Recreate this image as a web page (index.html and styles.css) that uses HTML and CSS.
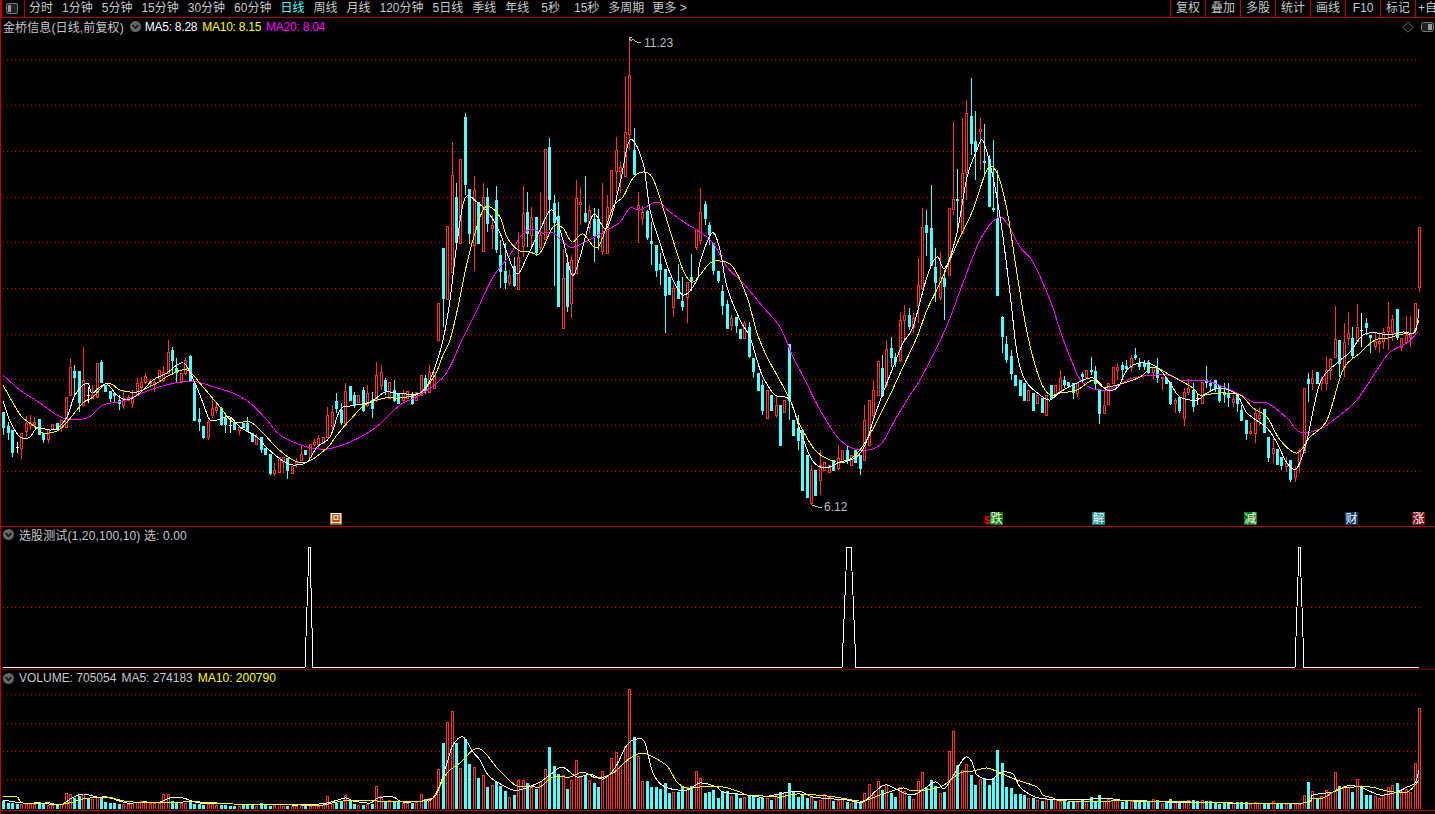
FILE: index.html
```html
<!DOCTYPE html>
<html lang="zh">
<head>
<meta charset="utf-8">
<title>金桥信息 日线</title>
<link rel="stylesheet" href="styles.css">
</head>
<body>
<div class="app">
  <header class="toolbar">
    <div class="tool-icon">
      <svg class="panel-icon" viewBox="0 0 12 11"><rect x="0.5" y="0.5" width="11" height="10" rx="1.5" class="panel-frame"/><rect x="2" y="2" width="3" height="7" class="panel-fill"/></svg>
    </div>
    <nav class="periods">
      <span>分时</span><span>1分钟</span><span>5分钟</span><span>15分钟</span><span>30分钟</span><span>60分钟</span><span class="active">日线</span><span>周线</span><span>月线</span><span>120分钟</span><span>5日线</span><span>季线</span><span>年线</span><span class="wide">5秒</span><span class="wider">15秒</span><span>多周期</span><span class="tight">更多 &gt;</span>
    </nav>
    <div class="tools">
      <span>复权</span><span>叠加</span><span>多股</span><span>统计</span><span>画线</span><span>F10</span><span>标记</span><span class="clip">+自</span>
    </div>
  </header>

  <section class="pane pane-main">
    <div class="legend">
      <span class="name spaced">金桥信息(日线,前复权)</span>
      <svg class="chev" viewBox="0 0 11 11"><circle cx="5.5" cy="5.5" r="5.5" class="chev-bg"/><path d="M2.5 4 L5.5 7 L8.5 4" class="chev-mark"/></svg>
      <span class="white tight-num">MA5: 8.28</span>
      <span class="yellow tight-num">MA10: 8.15</span>
      <span class="magenta tight-num">MA20: 8.04</span>
      <span class="legend-right">
        <svg class="diamond" viewBox="0 0 12 12"><path d="M6 0.8 L11.2 6 L6 11.2 L0.8 6 Z"/></svg>
        <svg class="panel-icon small" viewBox="0 0 13 10"><rect x="0.5" y="0.5" width="12" height="9" rx="2" class="panel-frame"/><rect x="7" y="2" width="4" height="6" class="panel-fill"/></svg>
      </span>
    </div>
    <svg class="plot plot-main" viewBox="1 36 1434 490" preserveAspectRatio="none">
      <g id="main-plot"></g>
      <g class="notes">
        <path class="note-line" d="M632 41 L629 39 L629 37 L632 37 M632 39 L637 42 L641 43"/>
        <text x="644" y="47" class="note">11.23</text>
        <path class="note-line" d="M812 505 L818 507 L822 507"/>
        <text x="824" y="511" class="note">6.12</text>
      </g>
      <g class="marks">
        <rect x="330" y="513" width="12" height="12" class="mk mk-orange"/><text x="336" y="523" class="mk-text">回</text>
        <text x="987" y="524" class="mk-dollar">$</text>
        <rect x="990" y="512" width="13" height="13" class="mk mk-green"/><text x="996.5" y="523" class="mk-text">跌</text>
        <rect x="1092" y="512" width="13" height="13" class="mk mk-teal"/><text x="1098.5" y="523" class="mk-text">解</text>
        <rect x="1244" y="512" width="13" height="13" class="mk mk-green"/><text x="1250.5" y="523" class="mk-text">减</text>
        <rect x="1345" y="512" width="13" height="13" class="mk mk-navy"/><text x="1351.5" y="523" class="mk-text">财</text>
        <rect x="1412" y="512" width="13" height="13" class="mk mk-maroon"/><text x="1418.5" y="523" class="mk-text">涨</text>
      </g>
    </svg>
  </section>

  <section class="pane pane-ind">
    <div class="legend short">
      <svg class="chev first" viewBox="0 0 11 11"><circle cx="5.5" cy="5.5" r="5.5" class="chev-bg"/><path d="M2.5 4 L5.5 7 L8.5 4" class="chev-mark"/></svg>
      <span class="name spaced">选股测试(1,20,100,10) 选: 0.00</span>
    </div>
    <svg class="plot plot-ind" viewBox="1 544 1434 125" preserveAspectRatio="none">
      <g id="ind-plot"></g>
    </svg>
  </section>

  <section class="pane pane-vol">
    <div class="legend short">
      <svg class="chev first" viewBox="0 0 11 11"><circle cx="5.5" cy="5.5" r="5.5" class="chev-bg"/><path d="M2.5 4 L5.5 7 L8.5 4" class="chev-mark"/></svg>
      <span class="name">VOLUME: 705054</span>
      <span class="name">MA5: 274183</span>
      <span class="yellow">MA10: 200790</span>
    </div>
    <svg class="plot plot-vol" viewBox="1 686 1434 123" preserveAspectRatio="none">
      <g id="vol-plot"></g>
    </svg>
  </section>
</div>
<script src="script.js"></script>
</body>
</html>
```
FILE: styles.css
```css
* { box-sizing: border-box; }
html, body { margin: 0; padding: 0; background: #000; height: 100%; overflow: hidden; }
body {
  font-family: "Liberation Sans", "Noto Sans CJK SC", sans-serif;
  font-size: 12px;
  color: #c8c8c8;
}
.app {
  display: flex;
  flex-direction: column;
  height: 814px;
  border-left: 1px solid #c00000;
}
.toolbar {
  display: flex;
  height: 18px;
  flex: none;
  border-bottom: 1px solid #b00000;
  line-height: 17px;
}
.tool-icon {
  width: 24px;
  flex: none;
  border-left: 1px solid #c00000;
  border-right: 1px solid #b00000;
  display: flex;
  align-items: center;
  padding-left: 4px;
}
.panel-icon { width: 12px; height: 11px; display: block; }
.panel-icon.small { width: 13px; height: 10px; }
.panel-frame { fill: #222; stroke: #777; stroke-width: 1; }
.panel-fill { fill: #999; }
.periods {
  flex: 1;
  min-width: 0;
  display: flex;
  gap: 9px;
  padding-left: 4px;
  white-space: nowrap;
}
.periods .active { color: #54ffff; }
.periods .wide { margin-left: 3px; }
.periods .wider { margin-left: 5px; }
.periods .tight { margin-left: -1px; }
.tools {
  width: 265px;
  flex: none;
  display: flex;
  overflow: hidden;
}
.tools span {
  flex: none;
  width: 35px;
  border-left: 1px solid #c00000;
  text-align: center;
  white-space: nowrap;
}
.tools .clip {
  width: 21px;
  text-align: left;
  padding-left: 2px;
}
.pane { flex: none; display: flex; flex-direction: column; }
.pane-main { height: 509px; border-bottom: 1px solid #c00000; }
.pane-ind { height: 143px; border-bottom: 1px solid #6a0000; }
.pane-vol { height: 141px; border-bottom: 1px solid #c00000; }
.legend {
  display: flex;
  align-items: center;
  flex: none;
  height: 18px;
  padding: 0 0 1px 2px;
  white-space: nowrap;
  gap: 5px;
}
.legend.short { height: 17px; padding: 0 0 2px 2px; }
.pane-vol .legend.short { height: 16px; padding: 0 0 0 2px; }
.name { color: #c8c8c8; }
.spaced { letter-spacing: 0.12px; }
.white { color: #fff; }
.yellow { color: #ff0; }
.magenta { color: #f0f; }
.tight-num { letter-spacing: -0.25px; }
.chev { width: 11px; height: 11px; flex: none; margin: 0 -1px 0 1px; }
.chev.first { margin: 0; }
.chev-bg { fill: #666; }
.chev-mark { fill: none; stroke: #111; stroke-width: 1.6; }
.legend-right {
  margin-left: auto;
  display: flex;
  align-items: center;
  gap: 7px;
  padding-right: 1px;
}
.diamond { width: 12px; height: 12px; fill: none; stroke: #666; stroke-width: 1; }
.plot { display: block; flex: none; width: 1434px; }
.plot-main { height: 490px; shape-rendering: crispEdges; }
.plot-ind { height: 125px; shape-rendering: crispEdges; }
.plot-vol { height: 123px; shape-rendering: crispEdges; }
.grid { stroke: #d80000; stroke-width: 1; stroke-dasharray: 1 3; }
.ma { fill: none; stroke-width: 1; }
.ma-w { stroke: #fff; }
.ma-y { stroke: #ff0; }
.ma-m { stroke: #f0f; }
.up { fill: #ff3232; }
.hole { fill: #000; }
.dn { fill: #54ffff; }
.doji { fill: #fff; }
.ind-line { fill: none; stroke: #fff; stroke-width: 1; }
.note { fill: #bdbdbd; font-size: 12px; shape-rendering: auto; }
.note-line { fill: none; stroke: #bdbdbd; stroke-width: 1; }
.mk-text { fill: #fff; font-size: 12px; text-anchor: middle; font-family: "Noto Sans CJK SC", sans-serif; }
.mk-dollar { fill: #f00; font-size: 11px; font-weight: bold; text-anchor: middle; }
.mk-orange { fill: #a85a10; }
.mk-green { fill: #0a7a0a; }
.mk-teal { fill: #0a8a8a; }
.mk-navy { fill: #0a3a70; }
.mk-maroon { fill: #7a0a0a; }
```
FILE: script.js
```js
// Daily K-line data, in page pixel coordinates: [x, colour(1 up, 0 down, 2 doji), bodyTop, bodyBottom, high, low]
var K = [
[3,0,412,427,412,435],[8,0,426,432,422,440],[12,0,430,452,430,457],[16,2,447,448,442,453],[20,1,433,448,433,459],[25,1,423,431,416,437],[29,1,423,425,415,430],[34,1,422,424,417,428],[38,0,419,434],[43,0,433,439,433,443],[48,1,429,439,429,443],[52,1,424,429],[56,0,423,429],[61,1,420,427,420,432],[65,1,397,427],[70,1,367,395,358,395],[75,0,371,377,365,395],[79,0,371,402,371,412],[83,1,380,405,347,405],[88,2,395,396,387,403],[92,1,395,398,385,398],[97,1,363,397],[101,0,362,382,360,382],[105,0,385,391],[110,0,391,398,391,402],[114,0,393,395,393,403],[119,0,400,403,395,410],[123,1,398,405,390,409],[127,1,397,400,395,400],[132,1,397,403,390,408],[136,1,383,395,378,395],[141,1,382,387,377,390],[145,1,376,382,373,384],[150,1,381,383,379,386],[154,1,382,384,380,392],[159,1,370,378,370,382],[163,1,372,380,366,382],[168,1,352,373,340,374],[172,0,350,360,347,375],[176,0,368,372,358,382],[181,1,373,382],[185,1,360,373,358,375],[189,0,356,380,355,382],[194,0,383,420,382,420],[199,0,419,421,408,431],[203,0,426,437,426,439],[207,1,422,437,420,440],[212,1,408,415,399,418],[216,1,407,410,402,414],[220,0,408,424,407,426],[225,0,418,424,415,433],[230,2,425,426,418,433],[234,0,422,429],[239,1,427,430,427,435],[243,0,423,427],[248,0,423,431,417,431],[252,0,433,441],[257,1,437,444,434,444],[261,0,437,449,437,453],[265,0,448,454],[270,0,454,473,454,475],[274,1,470,473,463,476],[279,1,457,472],[283,1,457,462,457,473],[287,0,458,470,458,479],[292,1,466,473],[296,1,462,464,458,468],[300,1,454,460,446,460],[305,0,450,454],[310,1,444,457],[314,1,442,444,439,446],[318,1,438,444,435,448],[323,1,437,443],[327,1,415,437,407,438],[331,1,412,426,405,430],[336,0,401,408,393,413],[340,0,410,422,403,425],[345,1,391,423,383,425],[349,0,386,400],
[354,0,395,405,392,408],[358,1,395,402],[363,0,390,410,387,412],[367,1,393,405,385,407],[372,0,400,408,392,418],[376,1,375,400,362,402],[381,1,372,385,365,390],[385,0,380,390,378,395],[390,1,382,398],[394,0,390,400,380,402],[398,0,393,403],[403,1,393,400,390,403],[407,1,391,398],[412,0,395,403,392,405],[416,1,392,400],[421,1,375,395],[425,0,378,390,375,394],[430,1,372,392,365,393],[434,1,372,388],
[439,1,303,340],[443,0,248,298,248,327],[447,1,226,299],[452,1,175,272,142,272],[456,0,197,242,183,245],[460,1,159,243],[464,0,117,184,113,195],[469,0,189,233,189,244],[473,1,190,245,176,271],[478,0,202,243],[482,1,197,251,183,251],[487,0,197,223,188,232],[491,1,225,228,215,249],[496,0,200,249,186,253],[500,0,255,271,240,288],[504,0,271,282,243,289],[509,1,275,283,270,286],[513,0,266,285,257,287],[518,1,257,289,232,289],[523,1,213,246,186,257],[527,0,212,233,192,247],[532,1,217,235,207,247],[536,0,217,252,217,256],[541,1,235,247,192,250],[545,1,149,239],[549,0,147,199,138,230],[553,0,203,222,195,286],[558,0,216,306,202,306],[562,1,278,328,249,328],[567,0,263,306,255,312],[571,1,260,303,255,318],[575,1,198,273,180,273],[580,1,202,204,187,225],[584,0,213,221,176,223],[589,1,210,227,205,233],[593,0,219,235,208,262],[598,0,219,237,209,250],[602,1,233,251,183,255],[607,1,207,253,195,253],[611,1,170,215],[615,1,150,171,137,193],[620,1,167,171,162,193],[624,1,132,176,76,176],[629,1,75,134,40,150],[633,0,150,174,128,174],[639,1,205,208,192,243],[642,1,212,218,206,225],[646,0,211,237,210,240],[651,0,241,243,222,265],[655,0,245,270,245,277],[660,0,264,269,253,285],[664,0,269,295,269,333],[669,0,277,294],[673,1,288,307,285,317],[678,0,281,298,264,298],[682,0,301,306,277,311],[686,1,282,297,282,323],[691,0,277,280,254,291],[695,1,229,247,229,250],
[700,1,212,240,188,245],[704,0,204,218,201,225],[709,0,225,234,222,245],[713,0,243,270,243,275],[718,0,271,280,271,283],[722,0,291,305,285,315],[727,0,304,328,300,328],[732,1,318,325,315,331],[736,0,317,325,317,333],[741,0,329,338],[745,1,323,338,321,338],[749,0,327,356,322,358],[753,0,358,371,358,378],[758,0,373,390],[762,0,385,410,380,415],[767,1,390,418],[771,0,395,410],[776,1,405,415,395,418],[780,0,405,445],[785,1,400,412],[789,0,344,400,344,420],[793,0,420,435],[798,0,428,440,415,450],[803,0,430,490],[807,0,455,497],[812,1,470,503,465,505],[816,0,470,495],[820,1,465,480,450,495],[825,1,462,470],[829,1,465,472],[834,0,460,470],[838,1,458,468,445,470],[843,1,450,462],[847,0,450,460,445,464],[852,1,455,465],[856,0,450,462],[860,0,455,468,455,475],[865,1,420,460,405,460],[869,1,400,445],[873,1,390,415,380,418],[878,1,361,395],[882,0,368,395,355,397],[887,1,349,385,340,387],
[892,0,348,357,337,367],[896,0,357,361,353,367],[901,1,320,360,312,362],[904,1,315,320,305,342],[908,0,315,326,308,330],[913,1,318,327,313,333],[918,1,285,305,258,323],[922,1,227,288,208,290],[927,0,225,232,210,256],[931,0,228,265,185,265],[935,0,267,282,248,302],[939,1,277,297,252,300],[944,0,278,286,270,320],[948,1,208,275],[953,1,199,209,122,215],[957,0,199,200,169,230],[962,1,173,233,118,233],[966,1,113,172,100,200],[971,0,116,143,78,155],[975,0,141,151,111,180],[979,1,129,131,118,170],[984,0,161,162,124,177],[988,0,159,206,155,207],[993,0,208,209,140,212],[998,0,218,295,170,295],[1002,0,317,336,316,353],[1007,0,344,359,336,363],[1011,0,356,373,350,380],[1016,0,375,385],[1020,0,380,395],[1025,0,383,400],[1029,1,390,400],[1033,0,393,410],[1038,1,395,403],[1042,0,398,412],[1047,1,395,415],[1051,0,385,398],[1056,1,385,395],[1060,1,378,392,370,392],
[1064,0,380,384,376,388],[1069,0,382,385],[1073,0,383,392,383,399],[1077,1,383,393,383,397],[1082,0,374,376,372,383],[1087,1,370,377],[1091,0,370,371,357,375],[1095,0,371,383,366,390],[1100,0,390,413,390,424],[1104,1,405,413,390,413],[1108,1,383,404],[1113,1,367,383],[1117,1,367,370,363,380],[1122,0,365,369,362,378],[1126,0,366,368,360,372],[1130,1,358,367,355,372],[1135,0,355,357,348,360],[1139,0,363,366,358,370],[1144,0,363,366,360,370],[1148,0,362,372,360,374],[1153,1,367,372,367,380],[1157,0,368,377,358,383],[1162,1,377,378,377,390],[1166,0,378,383],[1171,0,382,403,382,405],[1175,1,400,403,398,413],[1179,0,397,410,397,413],[1184,1,392,418,388,426],[1188,1,388,392,379,395],[1193,0,390,406,383,412],[1197,2,398,399,393,405],[1202,1,382,403],[1206,0,380,382,366,388],[1210,0,383,385,380,390],[1215,0,380,388,380,392],[1220,0,385,400,385,403],[1224,0,392,394,383,403],[1228,0,393,397,383,407],[1233,1,399,402,395,407],[1237,0,395,403,395,412],[1242,0,410,420,405,420],[1246,0,420,433,420,440],[1251,1,431,433,423,435],[1255,1,413,433,410,443],[1259,1,415,418,407,425],[1264,0,409,432],[1269,0,437,457,437,462],[1273,1,448,453,438,463],[1277,0,449,464,449,465],[1282,0,457,465,457,470],[1286,1,463,466,457,472],[1290,0,460,479,460,482],[1295,1,469,477,466,482],[1300,1,450,463,448,473],[1304,1,388,452],[1309,0,379,383,373,402],[1313,1,378,383,370,390],[1317,0,372,383],[1322,1,379,383,377,391],[1326,1,370,383,356,390],[1331,1,359,370,358,380],[1336,1,339,357,306,357],[1340,0,340,363,340,377],[1344,1,342,367,323,377],[1349,1,333,338,312,345],[1353,0,338,355,327,359],[1357,1,327,341,304,341],[1362,2,330,331,313,347],[1366,0,323,327,318,335],[1371,0,335,337,335,353],[1375,1,341,346,332,350],[1379,1,341,343,333,353],[1384,1,332,341,328,349],[1388,1,327,331,302,350],[1393,1,319,332,315,341],[1397,0,309,337,309,340],[1402,1,338,347,338,351],[1406,1,335,342,316,343],[1410,1,335,337,316,347],[1415,1,303,330,303,335],[1419,1,227,287,227,292]
];

var MA5 = [3,401,10,421,20,437,30,437,37,428,50,430,58,428,67,417,75,395,87,383,92,393,100,387,107,384,117,395,127,400,140,393,153,380,167,373,177,365,185,364,195,383,203,403,210,420,220,419,230,417,240,427,257,437,267,448,283,461,293,465,307,462,317,447,330,437,340,410,350,406,370,402,385,392,395,393,420,393,432,375,443,340,450,300,457,243,465,198,478,203,490,215,500,233,507,253,517,274,527,257,540,230,552,210,563,240,572,275,580,257,593,215,607,228,620,183,630,140,643,163,650,210,660,243,670,273,683,295,697,280,700,262,712,233,720,250,727,287,740,320,750,337,757,360,763,377,775,395,790,400,800,430,812,460,825,468,840,462,855,458,865,445,875,415,883,393,890,375,903,343,913,327,927,277,937,257,945,268,957,233,967,177,977,150,983,141,993,177,1002,230,1010,293,1017,353,1025,380,1040,395,1050,400,1060,392,1077,383,1093,378,1107,390,1118,387,1127,370,1140,363,1157,367,1170,383,1180,397,1197,400,1207,393,1220,388,1237,395,1247,413,1267,428,1277,443,1287,463,1297,468,1307,440,1320,383,1337,363,1350,352,1363,335,1377,333,1388,335,1403,332,1415,332,1419,309];
var MA10 = [3,385,13,403,22,417,37,428,43,433,57,431,67,422,83,403,93,397,105,384,113,385,120,390,137,392,157,383,170,375,187,370,203,387,220,407,233,422,250,422,263,433,277,448,293,460,307,462,327,448,337,435,350,420,365,405,385,398,400,398,420,393,435,375,443,355,450,340,458,307,467,263,475,233,483,210,490,207,500,217,507,237,518,250,530,252,540,253,553,227,563,228,572,242,583,234,598,247,613,207,623,197,633,178,643,172,652,177,660,198,672,237,683,270,692,282,700,275,710,263,720,261,733,267,747,297,757,333,767,357,778,377,790,400,800,425,815,450,830,460,845,462,860,450,875,425,890,395,903,367,917,337,927,310,940,283,960,237,973,210,987,170,997,173,1007,210,1018,280,1028,337,1040,380,1050,395,1060,393,1077,390,1093,380,1103,387,1117,385,1140,377,1153,367,1170,375,1193,388,1200,395,1220,393,1240,395,1253,408,1267,417,1280,440,1297,453,1310,437,1327,420,1343,370,1360,353,1375,340,1388,338,1403,334,1413,333,1419,320];
var MA20 = [3,375,20,390,40,403,63,418,87,418,103,405,123,401,150,390,180,382,197,382,217,388,233,393,250,403,267,420,280,435,307,447,327,449,350,442,375,428,400,405,420,395,445,375,462,340,477,310,493,277,510,255,520,237,532,229,542,233,553,233,570,247,583,243,607,230,620,222,630,208,640,210,657,202,670,212,687,224,700,232,713,243,727,267,743,283,763,307,780,327,793,357,805,380,820,410,840,440,860,450,880,445,895,420,910,395,920,380,945,330,963,283,980,240,997,218,1007,223,1020,247,1033,262,1050,300,1060,330,1070,357,1083,383,1107,390,1133,378,1167,375,1180,380,1207,381,1237,393,1253,402,1267,403,1287,418,1300,432,1320,429,1340,415,1357,400,1377,370,1390,352,1407,343,1418,332];

// Volume: x, height
var V = [3,8,8,6,12,6,16,5,20,5,25,5,29,5,34,5,38,7,43,5,48,4,52,4,56,4,61,5,65,16,70,15,75,11,79,13,83,15,88,10,92,10,97,12,101,11,105,7,110,6,114,6,119,5,123,5,127,5,132,6,136,7,141,8,145,8,150,6,154,6,159,6,163,15,168,15,172,8,176,7,181,6,185,6,189,7,194,5,199,5,203,4,207,5,212,5,216,4,220,4,225,4,230,3,234,3,239,3,243,4,248,5,252,4,257,3,261,6,265,4,270,3,274,4,279,5,283,3,287,3,292,3,296,3,300,5,305,3,310,3,314,4,318,3,323,4,327,13,331,5,336,6,340,8,345,14,349,9,354,5,358,4,363,4,367,5,372,5,376,23,381,13,385,8,390,9,394,7,398,7,403,6,407,6,412,6,416,7,421,15,425,10,430,11,434,12,439,40,443,66,447,87,452,98,456,66,460,41,464,70,469,45,473,42,478,31,
483,34,487,22,492,24,496,27,501,23,505,18,509,12,513,14,518,29,523,29,527,26,532,22,536,20,541,27,545,40,549,62,553,43,558,35,562,34,567,20,571,29,575,49,580,32,584,34,589,29,593,26,598,22,602,38,607,34,611,51,615,57,620,43,624,63,629,120,633,72,638,53,642,28,646,28,651,22,655,22,660,20,664,26,669,16,673,17,678,17,682,23,686,22,691,23,695,38,700,31,704,16,709,17,713,19,718,11,722,18,727,18,731,13,736,15,740,11,745,12,749,14,753,14,758,11,762,11,767,11,771,9,776,14,780,17,785,17,789,26,793,18,798,12,803,14,807,11,812,12,816,8,820,9,825,15,829,12,834,8,838,9,843,11,847,7,852,6,856,8,860,6,865,16,869,25,873,15,878,28,882,19,887,25,892,16,896,12,901,22,904,18,908,13,913,10,918,28,922,37,927,21,931,29,935,23,939,16,944,17,948,58,953,78,957,44,
962,39,966,45,971,34,975,24,979,30,984,31,988,24,993,31,998,59,1002,46,1007,22,1011,21,1016,15,1020,15,1025,14,1029,11,1033,11,1038,9,1042,8,1047,10,1051,10,1056,10,1060,8,1064,9,1069,7,1073,8,1077,7,1082,10,1087,8,1091,12,1095,8,1100,14,1104,8,1108,10,1113,9,1117,10,1122,7,1126,9,1130,8,1135,9,1139,8,1144,8,1148,8,1153,10,1157,9,1162,6,1166,8,1171,10,1175,8,1179,6,1184,8,1188,9,1193,9,1197,8,1202,9,1206,8,1210,8,1215,7,1220,5,1224,6,1228,7,1233,6,1237,7,1242,7,1246,7,1251,5,1255,7,1259,6,1264,5,1269,6,1273,8,1277,5,1282,5,1286,5,1290,6,1295,5,1300,5,1304,14,1309,27,1313,18,1317,10,1322,13,1326,19,1331,16,1336,37,1340,23,1344,23,1349,22,1353,17,1357,30,1362,21,1366,14,1371,14,1375,13,1379,11,1384,14,1388,22,1393,24,1397,26,1402,18,1406,20,1410,17,1415,46,1419,101];

var VMA5 = [3,800,23,803,40,803,57,805,63,804,72,798,83,794,97,797,110,798,127,803,143,802,160,802,170,798,183,798,200,803,233,804,300,805,327,803,345,798,353,801,370,803,378,798,393,797,403,802,427,800,437,793,447,763,453,745,463,737,473,752,480,760,488,775,497,782,513,790,523,789,540,782,550,775,562,767,577,777,590,774,603,779,615,768,627,745,637,739,645,743,653,773,665,787,687,790,700,783,717,787,723,792,747,795,763,797,797,791,813,797,847,800,863,802,877,790,887,785,912,795,935,782,945,788,960,764,966,757,972,762,977,775,990,780,997,775,1002,772,1013,774,1020,787,1033,796,1047,799,1093,799,1113,799,1133,801,1227,803,1303,803,1313,795,1333,792,1347,786,1360,787,1380,795,1397,792,1407,787,1415,783,1419,770];
var VMA10 = [3,797,17,797,23,803,50,803,57,805,73,802,83,799,107,797,133,802,200,802,233,804,300,805,323,805,343,801,377,801,423,801,433,798,447,773,460,763,473,750,480,749,487,755,497,768,507,778,517,786,530,786,540,787,553,777,570,777,583,772,597,778,613,773,630,758,643,753,653,757,667,766,677,782,687,788,700,787,723,787,740,792,747,795,763,796,780,797,797,794,827,796,847,799,863,801,880,795,903,788,913,791,940,787,960,773,973,771,987,768,1000,773,1017,780,1037,787,1043,795,1053,798,1067,801,1147,801,1233,803,1303,803,1310,799,1323,798,1333,792,1343,788,1370,787,1387,791,1407,792,1419,780];

var X0 = 3.4, STEP = 4.4375, N = 320;

function idx(x) { return Math.max(0, Math.min(N - 1, Math.round((x - X0) / STEP))); }
function px(i) { return Math.round(X0 + STEP * i); }
function rect(x, y, w, h, cls) {
  return '<rect x="' + x + '" y="' + y + '" width="' + w + '" height="' + Math.max(1, h) + '" class="' + cls + '"/>';
}
// Smooth curve through the points (Catmull-Rom as cubic Béziers)
function poly(arr, cls) {
  var n = arr.length / 2, d = "M" + arr[0] + " " + arr[1];
  function P(i) { i = Math.max(0, Math.min(n - 1, i)); return [arr[2 * i], arr[2 * i + 1]]; }
  for (var i = 0; i < n - 1; i++) {
    var a = P(i - 1), b = P(i), c = P(i + 1), e = P(i + 2);
    d += "C" + (b[0] + (c[0] - a[0]) / 6).toFixed(1) + " " + (b[1] + (c[1] - a[1]) / 6).toFixed(1) + " " +
      (c[0] - (e[0] - b[0]) / 6).toFixed(1) + " " + (c[1] - (e[1] - b[1]) / 6).toFixed(1) + " " + c[0] + " " + c[1];
  }
  return '<path d="' + d + '" class="' + cls + '"/>';
}
function grid(ys) {
  return ys.map(function (y) {
    return '<line x1="3" x2="1421" y1="' + y + '.5" y2="' + y + '.5" class="grid"/>';
  }).join("");
}
function at(arr, x) {
  for (var i = 2; i < arr.length; i += 2) {
    if (x <= arr[i]) {
      var t = (x - arr[i - 2]) / (arr[i] - arr[i - 2]);
      return arr[i - 1] + t * (arr[i + 1] - arr[i - 1]);
    }
  }
  return arr[arr.length - 1];
}

var bars = [];
K.forEach(function (k) { bars[idx(k[0])] = k; });
for (var i = 0; i < N; i++) {
  if (!bars[i]) {
    var m = Math.round(at(MA5, px(i)));
    bars[i] = [px(i), i % 3 ? 0 : 1, m - 2, m + 2, m - 5, m + 5];
  }
}

// Candles
var s = grid([59, 105, 151, 197, 242, 288, 334, 379, 425, 471]);
bars.forEach(function (k, i) {
  var x = px(i), c = k[1], top = k[2], bot = k[3];
  var hi = k[4] === undefined ? top : k[4], lo = k[5] === undefined ? bot : k[5];
  var cls = c === 1 ? "up" : c === 0 ? "dn" : "doji";
  s += rect(x, hi, 1, lo - hi, cls);
  if (c === 2) { s += rect(x - 1, top, 3, 1, cls); return; }
  s += rect(x - 1, top, 3, bot - top + 1, cls);
  if (c === 1 && bot - top >= 2) s += rect(x, top + 1, 1, bot - top - 1, "hole");
});
s += poly(MA20, "ma ma-m") + poly(MA10, "ma ma-y") + poly(MA5, "ma ma-w");
document.getElementById("main-plot").innerHTML = s;

// Selection indicator
document.getElementById("ind-plot").innerHTML =
  grid([607]) +
  '<polyline class="ind-line" points="3,667.5 305,667.5 309,547 310,547 313,667.5 842,667.5 847,547 851,547 856,667.5 1295,667.5 1299,547 1300,547 1304,667.5 1419,667.5"/>';

// Volume
var vols = [];
for (var j = 0; j < V.length; j += 2) vols[idx(V[j])] = V[j + 1];
var v = grid([694, 723, 751, 779]);
var BASE = 809;
for (var b = 0; b < N; b++) {
  var h = vols[b] || (3 + (b * 7) % 4);
  var x = px(b), up = bars[b][1] === 1;
  v += rect(x - 1, BASE - h, 3, h, up ? "up" : "dn");
  if (up && h >= 3) v += rect(x, BASE - h + 1, 1, h - 1, "hole");
}
v += poly(VMA5, "ma ma-w") + poly(VMA10, "ma ma-y");
document.getElementById("vol-plot").innerHTML = v;
```
